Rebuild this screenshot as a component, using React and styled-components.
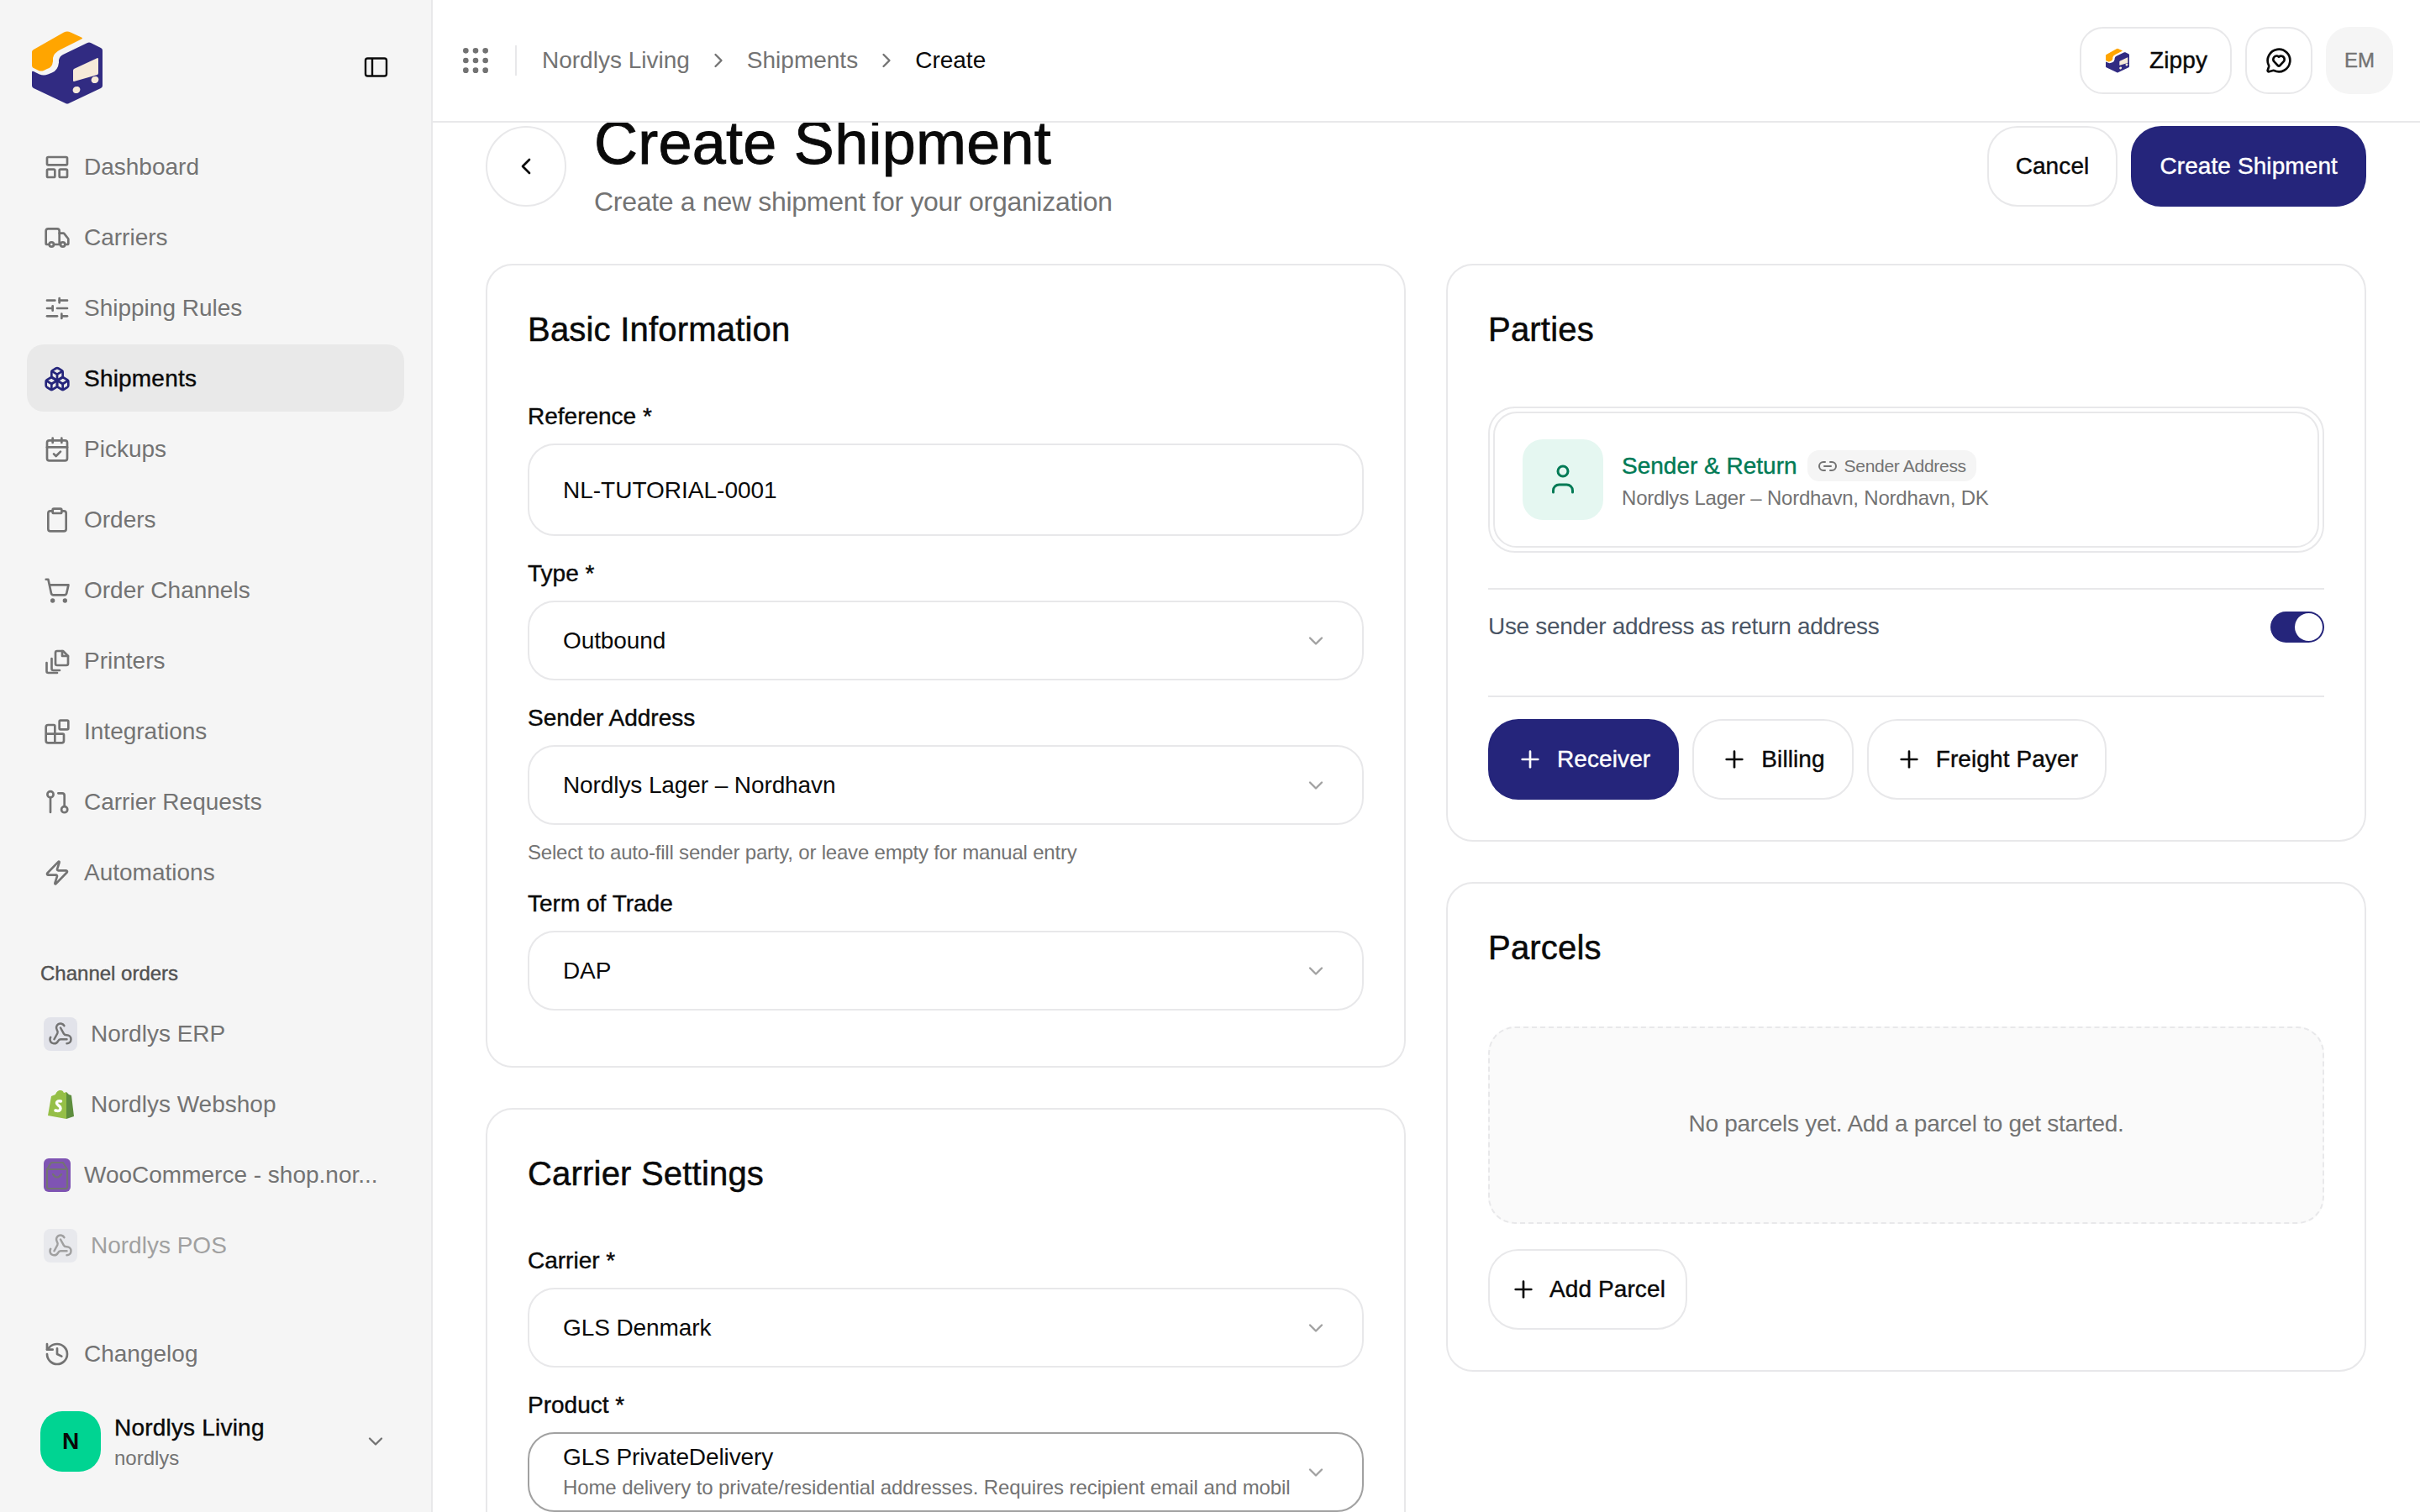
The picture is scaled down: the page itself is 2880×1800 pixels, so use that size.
import React from 'react';
import styled, { createGlobalStyle, css } from 'styled-components';
import {
  LayoutPanelTop, Truck, SlidersHorizontal, Boxes, CalendarCheck, Clipboard, ShoppingCart,
  Blocks, Zap, History, Webhook, ChevronDown, ChevronRight, ChevronLeft, Grip,
  MessageCircleHeart, Plus, Link2,
} from 'lucide-react';

const navy = '#25257b';
const line = '#e8e8ea';
const grey = '#737373';
const ink = '#0a0a0a';

const medium = css`
  -webkit-text-stroke: 0.4px currentColor;
`;

const GlobalStyle = createGlobalStyle`
  * { box-sizing: border-box; }
  html, body { margin: 0; height: 100%; overflow: hidden; background: #fff; }
  body {
    font-family: "Liberation Sans", Arial, sans-serif;
    font-size: 28px;
    color: ${ink};
  }
`;

const Shell = styled.div`
  display: flex;
  width: 2880px;
  height: 1800px;
  overflow: hidden;
`;

const Sidebar = styled.aside`
  flex: 0 0 515px;
  min-width: 0;
  display: flex;
  flex-direction: column;
  height: 100%;
  padding: 32px 32px 48px;
  background: #f5f5f5;
  border-right: 2px solid ${line};
`;

const SideTop = styled.div`
  display: flex;
  align-items: center;
  justify-content: space-between;
  height: 96px;
  margin-bottom: 30px;
  padding-right: 18px;
`;

const NavList = styled.nav`
  display: flex;
  flex-direction: column;
  gap: 4px;
  min-width: 0;
`;

const NavItem = styled.a`
  display: flex;
  align-items: center;
  gap: 16px;
  height: 80px;
  min-width: 0;
  padding: 1px 30px 0 20px;
  border-radius: 20px;
  color: ${grey};
  background: ${(p) => (p.$active ? '#e9e9e9' : 'transparent')};
  opacity: ${(p) => (p.$dim ? 0.65 : 1)};
  white-space: nowrap;
  svg { flex: none; }
  ${(p) => p.$active && css`
    color: ${ink};
    letter-spacing: 0.2px;
    ${medium}
    svg { color: ${navy}; -webkit-text-stroke: 0; }
  `}
`;

const SectionLabel = styled.div`
  margin: 65px 0 15px;
  padding-left: 16px;
  font-size: 24px;
  line-height: 32px;
  color: #525252;
  ${medium}
`;

const ChannelBadge = styled.span`
  flex: none;
  display: flex;
  align-items: center;
  justify-content: center;
  width: ${(p) => (p.$narrow ? '32px' : '40px')};
  height: 40px;
  border-radius: 8px;
  background: ${(p) => p.$bg || 'transparent'};
`;

const SideBottom = styled.div`
  margin-top: auto;
  display: flex;
  flex-direction: column;
  gap: 29px;
`;

const OrgRow = styled.div`
  display: flex;
  align-items: center;
  gap: 16px;
  padding: 0 20px 0 16px;
`;

const OrgAvatar = styled.div`
  flex: none;
  display: flex;
  align-items: center;
  justify-content: center;
  width: 72px;
  height: 72px;
  border-radius: 26px;
  background: #00d492;
  font-weight: 700;
`;

const OrgText = styled.div`
  flex: 1;
  display: flex;
  flex-direction: column;
`;

const OrgName = styled.span`
  line-height: 40px;
  letter-spacing: 0.2px;
  ${medium}
`;

const OrgSlug = styled.span`
  font-size: 24px;
  line-height: 32px;
  color: ${grey};
`;

const Main = styled.main`
  flex: 1;
  min-width: 0;
  display: flex;
  flex-direction: column;
  height: 100%;
`;

const TopBar = styled.header`
  position: relative;
  z-index: 1;
  flex: 0 0 146px;
  display: flex;
  align-items: center;
  padding: 0 32px 0 31px;
  background: #fff;
  border-bottom: 2px solid ${line};
`;

const GripIcon = styled(Grip)`
  color: ${grey};
`;

const VRule = styled.span`
  width: 2px;
  height: 36px;
  margin: 0 30px 0 27px;
  background: ${line};
`;

const Crumbs = styled.div`
  display: flex;
  align-items: center;
  gap: 20px;
  color: ${grey};
`;

const CurrentCrumb = styled.span`
  color: ${ink};
`;

const TopActions = styled.div`
  display: flex;
  align-items: center;
  gap: 16px;
  margin-left: auto;
`;

const Button = styled.button`
  display: inline-flex;
  align-items: center;
  justify-content: center;
  gap: ${(p) => p.$gap || 16}px;
  height: ${(p) => p.$h || 96}px;
  padding: 0 ${(p) => p.$pad ?? 32}px;
  border: 2px solid ${(p) => (p.$primary ? navy : line)};
  border-radius: ${(p) => (p.$h === 80 ? 28 : 36)}px;
  background: ${(p) => (p.$primary ? navy : '#fff')};
  color: ${(p) => (p.$primary ? '#fff' : ink)};
  font: inherit;
  letter-spacing: 0.1px;
  white-space: nowrap;
  align-self: flex-start;
  ${medium}
`;

const AvatarChip = styled.div`
  display: flex;
  align-items: center;
  justify-content: center;
  width: 80px;
  height: 80px;
  border-radius: 28px;
  background: #f5f5f5;
  color: ${grey};
  font-size: 24px;
  ${medium}
`;

const Content = styled.div`
  flex: 1;
  min-height: 0;
  overflow: hidden;
  padding: 0 64px 0 63px;
`;

const Scrolled = styled.div`
  margin-top: -16px;
`;

const PageHead = styled.div`
  display: flex;
  align-items: flex-start;
  gap: 33px;
  height: 136px;
  margin-bottom: 48px;
`;

const BackButton = styled.button`
  flex: none;
  display: flex;
  align-items: center;
  justify-content: center;
  width: 96px;
  height: 96px;
  margin-top: 20px;
  border: 2px solid ${line};
  border-radius: 50%;
  background: #fff;
  color: ${ink};
`;

const HeadText = styled.div`
  flex: 1;
`;

const PageTitle = styled.h1`
  margin: 0 0 14px;
  font-size: 72px;
  line-height: 80px;
  font-weight: 400;
  letter-spacing: 0.25px;
  -webkit-text-stroke: 0.9px currentColor;
`;

const PageSub = styled.p`
  margin: 0;
  font-size: 32px;
  line-height: 32px;
  letter-spacing: -0.3px;
  color: ${grey};
`;

const HeadActions = styled.div`
  display: flex;
  gap: 16px;
  margin-top: 20px;
`;

const Columns = styled.div`
  display: grid;
  grid-template-columns: minmax(0, 1fr) minmax(0, 1fr);
  gap: 48px;
  align-items: start;
`;

const Column = styled.div`
  display: flex;
  flex-direction: column;
  gap: 48px;
  min-width: 0;
`;

const Card = styled.section`
  padding: 48px;
  padding-bottom: ${(p) => p.$bottom || 48}px;
  border: 2px solid ${line};
  border-radius: 32px;
  background: #fff;
`;

const CardTitle = styled.h2`
  margin: 0 0 ${(p) => p.$gap || 55}px;
  font-size: 40px;
  line-height: 56px;
  font-weight: 400;
  letter-spacing: 0.2px;
  -webkit-text-stroke: 0.5px currentColor;
`;

const Form = styled.div`
  display: flex;
  flex-direction: column;
  gap: 24px;
`;

const Field = styled.div`
  display: flex;
  flex-direction: column;
  gap: 13px;
`;

const Label = styled.label`
  padding-top: 2px;
  line-height: 38px;
  ${medium}
`;

const InputBox = styled.div`
  display: flex;
  align-items: center;
  height: 110px;
  padding: 2px 40px 0;
  border: 2px solid ${line};
  border-radius: 32px;
`;

const SelectBox = styled.div`
  display: flex;
  align-items: center;
  justify-content: space-between;
  gap: 16px;
  height: 95px;
  padding: 0 41px 0 40px;
  border: 2px solid ${(p) => (p.$focused ? '#a1a1a1' : line)};
  border-radius: 32px;
  svg { flex: none; color: #a1a1a1; }
`;

const SelectText = styled.div`
  min-width: 0;
  flex: 1;
  display: flex;
  flex-direction: column;
`;

const SelectMain = styled.span`
  line-height: 36px;
  letter-spacing: -0.1px;
`;

const SelectHint = styled.span`
  font-size: 24px;
  line-height: 36px;
  letter-spacing: -0.1px;
  color: ${grey};
  white-space: nowrap;
  overflow: hidden;
`;

const HelpText = styled.p`
  margin: 4px 0 0;
  font-size: 24px;
  line-height: 32px;
  letter-spacing: -0.2px;
  color: ${grey};
`;

const PartyOuter = styled.div`
  padding: 4px;
  margin-bottom: 42px;
  border: 2px solid ${line};
  border-radius: 32px;
`;

const PartyInner = styled.div`
  display: flex;
  align-items: center;
  gap: 22px;
  padding: 31px 33px;
  border: 2px solid ${line};
  border-radius: 28px;
`;

const PartyIcon = styled.div`
  flex: none;
  display: flex;
  align-items: center;
  justify-content: center;
  width: 96px;
  height: 96px;
  border-radius: 24px;
  background: #e5f7f1;
  color: #007a55;
`;

const PartyText = styled.div`
  display: flex;
  flex-direction: column;
`;

const PartyHead = styled.div`
  display: flex;
  align-items: center;
  gap: 12px;
  height: 40px;
  margin-top: 3px;
`;

const PartyName = styled.span`
  color: #007a55;
  ${medium}
`;

const LinkBadge = styled.span`
  display: inline-flex;
  align-items: center;
  gap: 8px;
  height: 37px;
  padding: 0 12px;
  border-radius: 14px;
  background: #f5f5f5;
  color: ${grey};
  font-size: 21px;
  letter-spacing: -0.3px;
`;

const PartySub = styled.span`
  font-size: 24px;
  line-height: 36px;
  letter-spacing: -0.2px;
  color: ${grey};
`;

const Rule = styled.hr`
  margin: 0;
  border: 0;
  border-top: 2px solid ${line};
`;

const ToggleRow = styled.div`
  display: flex;
  align-items: center;
  justify-content: space-between;
  height: 88px;
  margin-bottom: 38px;
  letter-spacing: -0.3px;
  color: #4a5565;
`;

const Toggle = styled.span`
  display: flex;
  justify-content: flex-end;
  width: 64px;
  height: 37px;
  padding: 2px;
  border-radius: 20px;
  background: ${navy};
`;

const ToggleKnob = styled.span`
  width: 33px;
  height: 33px;
  border-radius: 50%;
  background: #fff;
`;

const ButtonRow = styled.div`
  display: flex;
  gap: 16px;
  margin-top: 26px;
`;

const EmptyBox = styled.div`
  display: flex;
  align-items: center;
  justify-content: center;
  height: 235px;
  margin-bottom: 30px;
  padding-bottom: 4px;
  border: 2px dashed ${line};
  border-radius: 32px;
  background: #fafafa;
  letter-spacing: -0.25px;
  color: ${grey};
`;

// zippy box logo, coordinates are taken from the top-left of the page
const Logo = ({ size }) => (
  <svg width={size} height={size} viewBox="32 32 96 96">
    <path fill="#ffa500" d="M76 38.500q4-2 8 0l13 6q2 1 0 2L72 59q-8 4-9 10v4q-1 8-7 9l-4 2q-3 1-6 0l-7-3.500q-1-1-1-3V62q0-2 2-3z" />
    <path fill="#312b82" d="M104 51q2-1 4 0l12 6q2 1 2 3v42q0 2-2 3l-38 18q-2 1-4 0l-38-18q-2-1-2-3V86q0-2 2-1l7 3.500q5 2 10 0l5-2q7-3 8-12v-3q1-5 6-7z" />
    <path fill="#f6ead9" d="M87 84q0-1 1-2l28-13q1 0 1 1v17q0 1-1 2l-28 8q-1 0-1-1z" />
    <ellipse fill="#f6ead9" cx="91" cy="107" rx="4.500" ry="4" transform="rotate(-25 91 107)" />
    <ellipse fill="#f6ead9" cx="113" cy="95" rx="4.500" ry="4" transform="rotate(-25 113 95)" />
  </svg>
);

const PanelIcon = () => (
  <svg width="32" height="32" viewBox="0 0 32 32" fill="none" stroke="#0a0a0a" strokeWidth="2.400">
    <rect x="4" y="5.500" width="25" height="21" rx="2.500" />
    <path d="M12 5.500v21" />
  </svg>
);

const PrintersIcon = () => (
  <svg width="32" height="32" viewBox="0 0 32 32" fill="none" stroke="currentColor" strokeWidth="2.670" strokeLinecap="round" strokeLinejoin="round">
    <path d="M16 4h7l6 6v9a2 2 0 0 1-2 2H16a2 2 0 0 1-2-2V6a2 2 0 0 1 2-2z" />
    <path d="M22 4v6h7" />
    <path d="M9.500 13v12a2 2 0 0 0 2 2H19" />
    <path d="M3.500 18v10a2 2 0 0 0 2 2H16" />
  </svg>
);

const RequestsIcon = () => (
  <svg width="32" height="32" viewBox="0 0 24 24" fill="none" stroke="currentColor" strokeWidth="2" strokeLinecap="round" strokeLinejoin="round">
    <circle cx="6" cy="5" r="2.700" />
    <path d="M6 8v13" />
    <circle cx="18.500" cy="18.500" r="2.700" />
    <path d="M13 4h3.500a2 2 0 0 1 2 2v9.500" />
  </svg>
);

const PersonIcon = () => (
  <svg width="40" height="40" viewBox="0 0 40 40" fill="none" stroke="currentColor" strokeWidth="3" strokeLinecap="round">
    <circle cx="20" cy="10" r="6" />
    <path d="M8.500 35v-2a7 7 0 0 1 7-7h9a7 7 0 0 1 7 7v2" />
  </svg>
);

const ShopifyIcon = () => (
  <svg width="34" height="36" viewBox="0 0 34 36">
    <path fill="#95bf47" d="M24 35 2 31 6 8l5-2q2-5 6-5 3 0 4 3l3-1z" />
    <path fill="#5e8e3e" d="m24 3 3 3 3 1 3 25-9 3z" />
    <path fill="none" stroke="#95bf47" strokeWidth="1.500" d="M11 10q1-7 5-8 3 0 3 6" />
    <path fill="none" stroke="#fff" strokeWidth="3.500" strokeLinecap="round" d="M17.500 14q-5-1-5 2c0 3 4.500 3 4.500 6.500q0 4-6 2.500" />
  </svg>
);

const WooIcon = () => (
  <svg width="32" height="40" viewBox="0 0 32 40" fill="none" stroke="#737373" strokeWidth="2.200" strokeLinecap="round" strokeLinejoin="round">
    <rect width="32" height="40" rx="6" fill="#7f54b3" stroke="none" />
    <path d="M9 5h14l5 8v21a2 2 0 0 1-2 2H6a2 2 0 0 1-2-2V13z" />
    <path d="M4 13h24" />
    <path d="M11 19q5 7 10 0" />
  </svg>
);

const navItems = [
  { label: 'Dashboard', icon: <LayoutPanelTop size={32} /> },
  { label: 'Carriers', icon: <Truck size={32} /> },
  { label: 'Shipping Rules', icon: <SlidersHorizontal size={32} /> },
  { label: 'Shipments', icon: <Boxes size={32} />, active: true },
  { label: 'Pickups', icon: <CalendarCheck size={32} /> },
  { label: 'Orders', icon: <Clipboard size={32} /> },
  { label: 'Order Channels', icon: <ShoppingCart size={32} /> },
  { label: 'Printers', icon: <PrintersIcon /> },
  { label: 'Integrations', icon: <Blocks size={32} /> },
  { label: 'Carrier Requests', icon: <RequestsIcon /> },
  { label: 'Automations', icon: <Zap size={32} /> },
];

const SelectField = ({ label, value, hint, focused, help }) => (
  <Field>
    <Label>{label}</Label>
    <SelectBox $focused={focused}>
      <SelectText>
        <SelectMain>{value}</SelectMain>
        {hint && <SelectHint>{hint}</SelectHint>}
      </SelectText>
      <ChevronDown size={28} />
    </SelectBox>
    {help && <HelpText>{help}</HelpText>}
  </Field>
);

const App = () => (
  <Shell>
    <GlobalStyle />
    <Sidebar>
      <SideTop>
        <Logo size={96} />
        <PanelIcon />
      </SideTop>
      <NavList>
        {navItems.map((item) => (
          <NavItem key={item.label} $active={item.active}>
            {item.icon}
            <span>{item.label}</span>
          </NavItem>
        ))}
      </NavList>
      <SectionLabel>Channel orders</SectionLabel>
      <NavList>
        <NavItem>
          <ChannelBadge $bg="#e2e3ea"><Webhook size={30} /></ChannelBadge>
          <span>Nordlys ERP</span>
        </NavItem>
        <NavItem>
          <ChannelBadge><ShopifyIcon /></ChannelBadge>
          <span>Nordlys Webshop</span>
        </NavItem>
        <NavItem>
          <ChannelBadge $narrow><WooIcon /></ChannelBadge>
          <span>WooCommerce - shop.nor...</span>
        </NavItem>
        <NavItem $dim>
          <ChannelBadge $bg="#e2e3ea"><Webhook size={30} /></ChannelBadge>
          <span>Nordlys POS</span>
        </NavItem>
      </NavList>
      <SideBottom>
        <NavItem>
          <History size={32} />
          <span>Changelog</span>
        </NavItem>
        <OrgRow>
          <OrgAvatar>N</OrgAvatar>
          <OrgText>
            <OrgName>Nordlys Living</OrgName>
            <OrgSlug>nordlys</OrgSlug>
          </OrgText>
          <ChevronDown size={28} color={grey} />
        </OrgRow>
      </SideBottom>
    </Sidebar>

    <Main>
      <TopBar>
        <GripIcon size={40} />
        <VRule />
        <Crumbs>
          <span>Nordlys Living</span>
          <ChevronRight size={28} />
          <span>Shipments</span>
          <ChevronRight size={28} />
          <CurrentCrumb>Create</CurrentCrumb>
        </Crumbs>
        <TopActions>
          <Button $h={80} $gap={22} $pad={27}>
            <Logo size={32} />
            Zippy
          </Button>
          <Button $h={80} $pad={22}>
            <MessageCircleHeart size={32} />
          </Button>
          <AvatarChip>EM</AvatarChip>
        </TopActions>
      </TopBar>

      <Content>
        <Scrolled>
          <PageHead>
            <BackButton>
              <ChevronLeft size={32} />
            </BackButton>
            <HeadText>
              <PageTitle>Create Shipment</PageTitle>
              <PageSub>Create a new shipment for your organization</PageSub>
            </HeadText>
            <HeadActions>
              <Button>Cancel</Button>
              <Button $primary>Create Shipment</Button>
            </HeadActions>
          </PageHead>

          <Columns>
            <Column>
              <Card $bottom={66}>
                <CardTitle>Basic Information</CardTitle>
                <Form>
                  <Field>
                    <Label>Reference *</Label>
                    <InputBox>NL-TUTORIAL-0001</InputBox>
                  </Field>
                  <SelectField label="Type *" value="Outbound" />
                  <SelectField
                    label="Sender Address"
                    value="Nordlys Lager – Nordhavn"
                    help="Select to auto-fill sender party, or leave empty for manual entry"
                  />
                  <SelectField label="Term of Trade" value="DAP" />
                </Form>
              </Card>
              <Card>
                <CardTitle>Carrier Settings</CardTitle>
                <Form>
                  <SelectField label="Carrier *" value="GLS Denmark" />
                  <SelectField
                    label="Product *"
                    value="GLS PrivateDelivery"
                    hint="Home delivery to private/residential addresses. Requires recipient email and mobil"
                    focused
                  />
                </Form>
              </Card>
            </Column>

            <Column>
              <Card>
                <CardTitle $gap={64}>Parties</CardTitle>
                <PartyOuter>
                  <PartyInner>
                    <PartyIcon><PersonIcon /></PartyIcon>
                    <PartyText>
                      <PartyHead>
                        <PartyName>Sender &amp; Return</PartyName>
                        <LinkBadge><Link2 size={24} />Sender Address</LinkBadge>
                      </PartyHead>
                      <PartySub>Nordlys Lager – Nordhavn, Nordhavn, DK</PartySub>
                    </PartyText>
                  </PartyInner>
                </PartyOuter>
                <Rule />
                <ToggleRow>
                  Use sender address as return address
                  <Toggle><ToggleKnob /></Toggle>
                </ToggleRow>
                <Rule />
                <ButtonRow>
                  <Button $primary><Plus size={32} />Receiver</Button>
                  <Button><Plus size={32} />Billing</Button>
                  <Button><Plus size={32} />Freight Payer</Button>
                </ButtonRow>
              </Card>
              <Card>
                <CardTitle $gap={66}>Parcels</CardTitle>
                <EmptyBox>No parcels yet. Add a parcel to get started.</EmptyBox>
                <Button $pad={24} $gap={15}><Plus size={32} />Add Parcel</Button>
              </Card>
            </Column>
          </Columns>
        </Scrolled>
      </Content>
    </Main>
  </Shell>
);

export default App;
